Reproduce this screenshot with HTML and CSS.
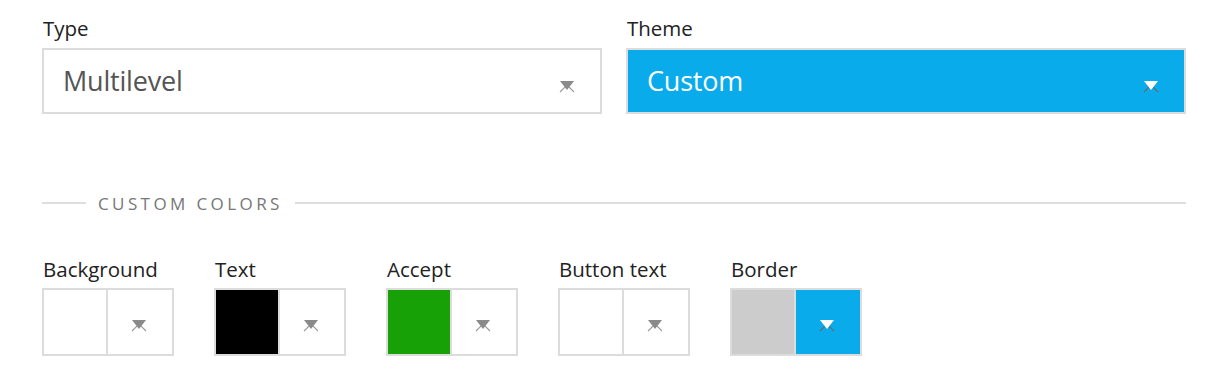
FILE: index.html
```html
<!DOCTYPE html>
<html lang="en">
<head>
<meta charset="utf-8">
<title>Settings</title>
<link rel="stylesheet" href="styles.css">
</head>
<body>
<div class="page">
  <div class="row">
    <div class="field">
      <div class="label">Type</div>
      <div class="select">
        <span class="select-value">Multilevel</span>
        <svg class="caret" width="18" height="13" viewBox="0 0 18 13"><polyline points="2,12 9,5 16,12" fill="none" stroke="#9a9a9a" stroke-width="1.1"/><polygon points="2,1 16,1 9,10" fill="#8a8a8a"/></svg>
      </div>
    </div>
    <div class="field">
      <div class="label">Theme</div>
      <div class="select select-active">
        <span class="select-value">Custom</span>
        <svg class="caret" width="18" height="13" viewBox="0 0 18 13"><polyline points="2,12 9,5 16,12" fill="none" stroke="#6a6a6a" stroke-width="1.1"/><polygon points="2,1 16,1 9,10" fill="#ffffff"/></svg>
      </div>
    </div>
  </div>

  <div class="divider">
    <span class="divider-line short"></span>
    <span class="divider-text">CUSTOM COLORS</span>
    <span class="divider-line"></span>
  </div>

  <div class="swatches">
    <div class="swatch">
      <div class="label">Background</div>
      <div class="picker">
        <div class="color white"></div>
        <div class="btn"><svg width="18" height="13" viewBox="0 0 18 13"><polyline points="2,12 9,5 16,12" fill="none" stroke="#9a9a9a" stroke-width="1.1"/><polygon points="2,1 16,1 9,10" fill="#8a8a8a"/></svg></div>
      </div>
    </div>
    <div class="swatch">
      <div class="label">Text</div>
      <div class="picker">
        <div class="color black"></div>
        <div class="btn"><svg width="18" height="13" viewBox="0 0 18 13"><polyline points="2,12 9,5 16,12" fill="none" stroke="#9a9a9a" stroke-width="1.1"/><polygon points="2,1 16,1 9,10" fill="#8a8a8a"/></svg></div>
      </div>
    </div>
    <div class="swatch">
      <div class="label">Accept</div>
      <div class="picker">
        <div class="color green"></div>
        <div class="btn"><svg width="18" height="13" viewBox="0 0 18 13"><polyline points="2,12 9,5 16,12" fill="none" stroke="#9a9a9a" stroke-width="1.1"/><polygon points="2,1 16,1 9,10" fill="#8a8a8a"/></svg></div>
      </div>
    </div>
    <div class="swatch">
      <div class="label">Button text</div>
      <div class="picker">
        <div class="color white"></div>
        <div class="btn"><svg width="18" height="13" viewBox="0 0 18 13"><polyline points="2,12 9,5 16,12" fill="none" stroke="#9a9a9a" stroke-width="1.1"/><polygon points="2,1 16,1 9,10" fill="#8a8a8a"/></svg></div>
      </div>
    </div>
    <div class="swatch">
      <div class="label">Border</div>
      <div class="picker">
        <div class="color gray"></div>
        <div class="btn btn-active"><svg width="18" height="13" viewBox="0 0 18 13"><polyline points="2,12 9,5 16,12" fill="none" stroke="#6a6a6a" stroke-width="1.1"/><polygon points="2,1 16,1 9,10" fill="#ffffff"/></svg></div>
      </div>
    </div>
  </div>
</div>
</body>
</html>
```

FILE: styles.css
```css
* { box-sizing: border-box; }

body {
  margin: 0;
  background: #ffffff;
  font-family: "Open Sans", "Noto Sans", sans-serif;
  color: #222222;
}

.page {
  padding: 14px 44px 0 42px;
}

.row {
  display: grid;
  grid-template-columns: 1fr 1fr;
  gap: 24px;
}

.label {
  font-size: 20.5px;
  line-height: 28px;
  height: 28px;
  color: #222222;
  padding-left: 1px;
  margin-bottom: 6px;
}

.select {
  height: 66px;
  border: 2px solid #dcdcdc;
  display: flex;
  align-items: center;
  justify-content: space-between;
  padding: 0 24px 0 19px;
  background: #ffffff;
}

.select-value {
  font-size: 27px;
  color: #555555;
  letter-spacing: -0.2px;
  padding-bottom: 1px;
}

.select-active {
  background: #09abeb;
}

.select-active .select-value {
  color: #ffffff;
}

.caret {
  display: block;
  margin-top: 10px;
}

.divider {
  margin-top: 77px;
  height: 24px;
  display: flex;
  align-items: center;
  gap: 12px;
}

.divider-line {
  flex: 1;
  height: 2px;
  background: #dedede;
}

.divider-line.short {
  flex: 0 0 44px;
}

.divider-text {
  font-size: 17px;
  letter-spacing: 3.4px;
  color: #777777;
}

.swatches {
  margin-top: 40px;
  display: flex;
  gap: 40px;
}

.swatch .label {
  margin-bottom: 5px;
}

.picker {
  display: flex;
  width: 132px;
  height: 68px;
  border: 2px solid #dcdcdc;
}

.color {
  width: 64px;
  border-right: 2px solid #dcdcdc;
}

.white { background: #ffffff; }
.black { background: #000000; }
.green { background: #17a106; }
.gray { background: #cccccc; }

.btn {
  flex: 1;
  display: flex;
  align-items: center;
  justify-content: center;
  padding-top: 6px;
  padding-right: 2px;
  background: #ffffff;
}

.btn-active {
  background: #09abeb;
}
```
